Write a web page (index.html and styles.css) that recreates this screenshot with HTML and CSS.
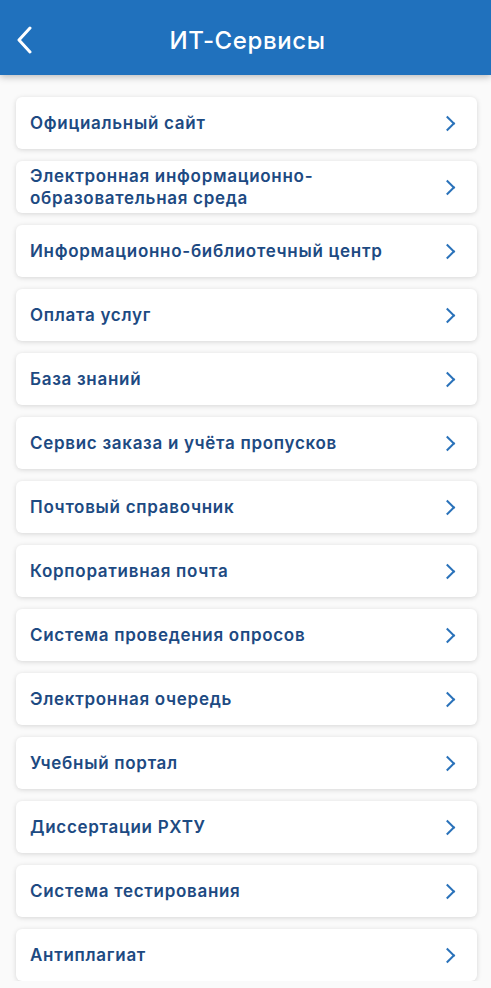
FILE: index.html
```html
<!DOCTYPE html>
<html lang="ru">
<head>
<meta charset="utf-8">
<title>ИТ-Сервисы</title>
<link rel="stylesheet" href="styles.css">
</head>
<body>
<div class="topbar">
  <a class="back" href="#">
    <svg width="18" height="28" viewBox="0 0 18 28"><path d="M14 2 L3 14 L14 26" fill="none" stroke="#fff" stroke-width="3" stroke-linecap="round" stroke-linejoin="round"/></svg>
  </a>
  <div class="title">ИТ-Сервисы</div>
</div>

<!-- list of services -->
<div class="list">
  <a class="item" href="#"><span>Официальный сайт</span><i class="arrow"></i></a>
  <a class="item" href="#"><span>Электронная информационно-<br>образовательная среда</span><i class="arrow"></i></a>
  <a class="item" href="#"><span>Информационно-библиотечный центр</span><i class="arrow"></i></a>
  <a class="item" href="#"><span>Оплата услуг</span><i class="arrow"></i></a>
  <a class="item" href="#"><span>База знаний</span><i class="arrow"></i></a>
  <a class="item" href="#"><span>Сервис заказа и учёта пропусков</span><i class="arrow"></i></a>
  <a class="item" href="#"><span>Почтовый справочник</span><i class="arrow"></i></a>
  <a class="item" href="#"><span>Корпоративная почта</span><i class="arrow"></i></a>
  <a class="item" href="#"><span>Система проведения опросов</span><i class="arrow"></i></a>
  <a class="item" href="#"><span>Электронная очередь</span><i class="arrow"></i></a>
  <a class="item" href="#"><span>Учебный портал</span><i class="arrow"></i></a>
  <a class="item" href="#"><span>Диссертации РХТУ</span><i class="arrow"></i></a>
  <a class="item" href="#"><span>Система тестирования</span><i class="arrow"></i></a>
  <a class="item" href="#"><span>Антиплагиат</span><i class="arrow"></i></a>
</div>
</body>
</html>
```

FILE: styles.css
```css
body {
    margin: 0;
    background-color: #fafafa;
    font-family: Inter, "Noto Sans", sans-serif;
}

.topbar {
    position: relative;
    height: 75px;
    background-color: #2071bd;
    box-shadow: 0 2px 7px rgba(0, 0, 0, 0.25);
    display: flex;
    align-items: center;
    justify-content: center;
}

.topbar .back {
    position: absolute;
    left: 16px;
    top: 26px;
    display: block;
    line-height: 0;
}

.topbar .title {
    color: white;
    font-size: 24px;
    font-weight: 500;
    letter-spacing: 0.6px;
    padding-top: 6px;
    margin-left: 4px;
}

.list {
    padding: 22px 14px 0 16px;
    display: flex;
    flex-direction: column;
    gap: 12px;
}

.item {
    height: 52px;
    box-sizing: border-box;
    padding: 0 22px 0 14px;
    background: white;
    border-radius: 6px;
    box-shadow: 0 1px 5px rgba(0, 0, 0, 0.15);
    display: flex;
    align-items: center;
    justify-content: space-between;
    text-decoration: none;
    color: #1d4a82;
    font-size: 17px;
    font-weight: 600;
    letter-spacing: 0.7px;
    line-height: 22px;
}

.arrow {
    width: 9px;
    height: 9px;
    border-right: 2.5px solid #2a72ba;
    border-top: 2.5px solid #2a72ba;
    transform: rotate(45deg);
    margin-right: 2px;
}
```
